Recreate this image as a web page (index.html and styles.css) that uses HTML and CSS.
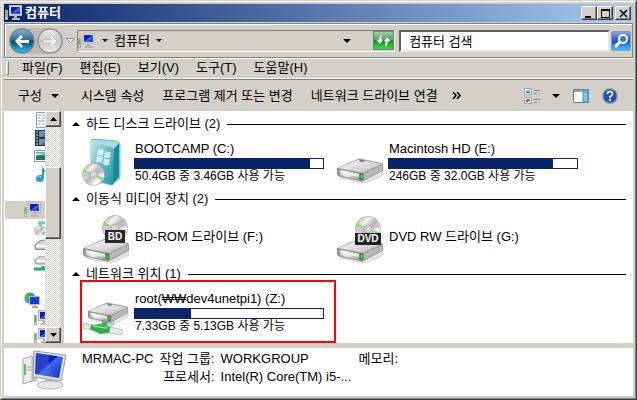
FILE: index.html
```html
<!DOCTYPE html>
<html lang="ko">
<head>
  <meta charset="UTF-8">
  <title>컴퓨터</title>
  <link rel="stylesheet" href="styles.css">
</head>
<body>

<!-- Shared icons -->
<svg class="sprite" width="0" height="0" aria-hidden="true">
  <defs>
    <linearGradient id="screen" x1="0" y1="0" x2="1" y2="1">
      <stop offset="0" stop-color="#0a1fa8"/><stop offset=".45" stop-color="#0620b4"/>
      <stop offset=".5" stop-color="#3f68e6"/><stop offset="1" stop-color="#0a28c0"/>
    </linearGradient>
    <linearGradient id="metal" x1="0" y1="0" x2="1" y2="1">
      <stop offset="0" stop-color="#fafafa"/><stop offset=".6" stop-color="#d6d6d6"/><stop offset="1" stop-color="#a8a8a8"/>
    </linearGradient>
    <linearGradient id="metalFront" x1="0" y1="0" x2="1" y2="0">
      <stop offset="0" stop-color="#9a9a9a"/><stop offset=".3" stop-color="#eeeeee"/><stop offset="1" stop-color="#8c8c8c"/>
    </linearGradient>
    <linearGradient id="disc" x1="0" y1="0" x2="1" y2="1">
      <stop offset="0" stop-color="#8f8f8f"/><stop offset=".3" stop-color="#f4f4f4"/>
      <stop offset=".5" stop-color="#b5b5b5"/><stop offset=".75" stop-color="#fdfdfd"/><stop offset="1" stop-color="#8a8a8a"/>
    </linearGradient>
    <linearGradient id="teal" x1="0" y1="0" x2="1" y2="1">
      <stop offset="0" stop-color="#c5e9ee"/><stop offset=".5" stop-color="#67b9c6"/><stop offset="1" stop-color="#1f93a2"/>
    </linearGradient>
    <linearGradient id="backFill" x1="0" y1="0" x2="0" y2="1">
      <stop offset="0" stop-color="#8fb4cc"/><stop offset=".45" stop-color="#2b6d99"/>
      <stop offset=".5" stop-color="#044a7b"/><stop offset="1" stop-color="#27c3f3"/>
    </linearGradient>
    <linearGradient id="nextFill" x1="0" y1="0" x2="0" y2="1">
      <stop offset="0" stop-color="#eeeeec"/><stop offset=".5" stop-color="#c6c6c3"/><stop offset="1" stop-color="#ecebe8"/>
    </linearGradient>

    <symbol id="pc" viewBox="0 0 18 16">
      <rect x=".5" y="5.5" width="2" height="9" fill="#e4e4e4" stroke="#aaa"/>
      <rect x="1" y="6" width="1" height="6" fill="#35d42f"/>
      <rect x="4.5" y=".5" width="12" height="10" fill="#ddd" stroke="#b5b5b5"/>
      <rect x="6" y="2" width="9" height="7" fill="url(#screen)"/>
      <path d="M9 11h3v2h3v2H7v-2h2z" fill="#b4b4b4"/>
    </symbol>

    <symbol id="pcLarge" viewBox="0 0 46 40">
      <path d="M1 9l9-3v25l-9 3z" fill="#ededed" stroke="#aaa"/>
      <path d="M10 6l5 1v24l-5 1z" fill="#bdbdbd"/>
      <rect x="2" y="14" width="2" height="11" fill="#42d035"/>
      <path d="M5 17h4M5 20h4" stroke="#999"/>
      <path d="M12 1l32 4-5 26-28-4z" fill="#dedede" stroke="#9b9b9b"/>
      <path d="M14 3l27 4-4 21-24-4z" fill="url(#screen)"/>
      <path d="M14 3l13 2c-1 8 1 14 5 22l-19-3z" fill="#5577e2" opacity=".4"/>
      <path d="M23 29h8l1 5h-9z" fill="#b6b6b6"/>
      <ellipse cx="28" cy="35" rx="13" ry="4" fill="#e8e8e8" stroke="#b5b5b5"/>
    </symbol>

    <symbol id="drive" viewBox="0 0 48 26">
      <path d="M2 15l26 9 19-10v4L29 26 4 21z" fill="#999" opacity=".3"/>
      <path d="M1 10L22 1q2-1 4 0l20 4q1 1 1 2v6L28 23q-2 1-4 0L2 18q-1-1-1-2z" fill="#999"/>
      <path d="M2 10L22 2h4l20 4-19 9z" fill="url(#metal)"/>
      <path d="M2 11l25 5v7L3 18q-1-1-1-2z" fill="url(#metalFront)" stroke="#888" stroke-width=".8"/>
      <path d="M27 16l19-9v6l-19 9z" fill="#b8b8b8"/>
      <path d="M4 12l19 4v3L5 16z" fill="#f4f4f4" opacity=".8"/>
      <path d="M24 16h3v5h-3z" fill="#39dc2b" stroke="#22691e" stroke-width=".8"/>
      <ellipse cx="26" cy="3" rx="3" ry="1" fill="#777"/>
    </symbol>

    <symbol id="discShape" viewBox="0 0 26 26">
      <circle cx="13" cy="13" r="12.5" fill="url(#disc)" stroke="#999" stroke-width=".6"/>
      <path d="M13 13L2 7l-1 4zM13 13l11 3-2 4z" fill="#67e064" opacity=".8"/>
      <path d="M13 13L1 12v4zM13 13l11-5 1 3z" fill="#e58bdc" opacity=".6"/>
      <path d="M13 13L5 3l-2 3z" fill="#f2df6a" opacity=".5"/>
      <circle cx="13" cy="13" r="4" fill="#d9d9d9" stroke="#999" stroke-width=".6"/>
      <circle cx="13" cy="13" r="1.6" fill="#fff" stroke="#999" stroke-width=".6"/>
    </symbol>

    <symbol id="bootcamp" viewBox="0 0 40 48">
      <path d="M9 2q0-2 3-2l22 2q4 1 4 4v33l-8 7-21-5z" fill="#a9dbe2" stroke="#5f9da8" stroke-width=".7"/>
      <path d="M9 2l20 6q3 1 3 4l-2 34-21-6z" fill="url(#teal)"/>
      <path d="M32 10l5-6v34l-7 8z" fill="#168c9b"/>
      <path d="M16 11q3-2 6 0l-1 6q-3-2-6 0zM23 12q3 2 6 1l-1 6q-3 1-6-1zM15 18q3-2 6 0l-1 6q-3-2-6 0zM22 19q3 2 6 1l-1 6q-3 1-6-1z" fill="#e3f5f8" opacity=".85"/>
      <use href="#discShape" x="0" y="24" width="23" height="23"/>
    </symbol>

    <symbol id="tinyDrive" viewBox="0 0 16 14">
      <path d="M1 6l5-4h10v8H3q-2 0-2-2z" fill="#d8d8d8" stroke="#888"/>
      <path d="M2 7h14" stroke="#f8f8f8" stroke-width="2"/>
    </symbol>

    <symbol id="plug" viewBox="0 0 42 16">
      <path d="M24 0h8v4l-4 4z" fill="#d5dedc" stroke="#a9b6b3" stroke-width=".7"/>
      <path d="M1 3l10 2-1 5-9-2zM28 7l13 3-2 5-12-2z" fill="#dfe9e8" stroke="#9fb1ae" stroke-width=".7"/>
      <path d="M9 5l9-1 10 3-1 6-9 1-10-5z" fill="#27ad4a"/>
      <path d="M11 6l14 2" stroke="#8ee6a0" stroke-width="1.5"/>
      <path d="M20 0h5v7h-5z" fill="#32b954"/>
    </symbol>
  </defs>
</svg>

<div class="window">
  <div class="frame">
    <header class="title-bar">
      <svg class="icon-pc" viewBox="0 0 18 16"><use href="#pc"/></svg>
      <h1>컴퓨터</h1>
      <div class="window-buttons">
        <button aria-label="최소화"><svg viewBox="0 0 9 9"><path d="M0 7h6v2H0z"/></svg></button>
        <button aria-label="최대화"><svg viewBox="0 0 9 9"><path fill-rule="evenodd" d="M0 0h9v9H0zM1 2v6h7V2z"/></svg></button>
        <button class="close" aria-label="닫기"><svg viewBox="0 0 9 9"><path d="M1 1l7 7M8 1L1 8" stroke="#000" stroke-width="1.6"/></svg></button>
      </div>
    </header>

    <nav class="nav-bar">
      <div class="travel">
        <button aria-label="뒤로">
          <svg viewBox="0 0 26 26"><circle cx="13" cy="13" r="12" fill="url(#backFill)" stroke="#6f8796" stroke-width="1.5"/><path d="M6 13l6-6 2 2-3 3h9v3h-9l3 3-2 2z" fill="#fff"/></svg>
        </button>
        <button aria-label="앞으로">
          <svg viewBox="0 0 26 26"><circle cx="13" cy="13" r="12" fill="url(#nextFill)" stroke="#949494" stroke-width="1.5"/><path d="M20 13l-6-6-2 2 3 3H6v3h9l-3 3 2 2z" fill="#f2f2f0" stroke="#b5b5b2" stroke-width=".7"/></svg>
        </button>
      </div>
      <button class="recent" aria-label="최근 위치"><svg viewBox="0 0 9 6"><path d="M.5.5h8l-4 4z" fill="#fff" stroke="#85898c"/></svg></button>
      <div class="address">
        <svg class="icon-pc" viewBox="0 0 18 16"><use href="#pc"/></svg>
        <button class="arrow small" aria-label="위치"></button>
        <button>컴퓨터</button>
        <button class="arrow small" aria-label="하위 위치"></button>
        <button class="arrow history" aria-label="이전 위치"></button>
        <button class="refresh" aria-label="새로 고침">
          <svg viewBox="0 0 16 14"><path d="M7 0Q3 1 3 6H0l4 5 4-5H6q0-3 1-6zM9 14q4-1 4-6h3l-4-5-4 5h2q0 3-1 6z" fill="#fff" stroke="#35743b" stroke-width=".5"/></svg>
        </button>
      </div>
      <div class="search">
        <input type="text" value="컴퓨터 검색" aria-label="컴퓨터 검색">
        <button class="search-btn" aria-label="검색">
          <svg viewBox="0 0 16 16"><path d="M7 9l-5 5" stroke="#fff" stroke-width="3"/><circle cx="10" cy="6" r="4" fill="#3978d9" stroke="#fff" stroke-width="2"/></svg>
        </button>
      </div>
    </nav>

    <div class="menu-bar">
      <span class="gripper"></span>
      <button>파일(F)</button>
      <button>편집(E)</button>
      <button>보기(V)</button>
      <button>도구(T)</button>
      <button>도움말(H)</button>
    </div>

    <div class="command-bar">
      <button class="organize">구성 <span class="arrow"></span></button>
      <button>시스템 속성</button>
      <button>프로그램 제거 또는 변경</button>
      <button>네트워크 드라이브 연결</button>
      <button class="more" aria-label="더 보기"><svg viewBox="0 0 9 7"><path d="M1 0l3 3.5L1 7M5 0l3 3.5L5 7" fill="none" stroke="#000" stroke-width="1.5"/></svg></button>
      <div class="view-tools">
        <button class="views" aria-label="보기 변경">
          <svg viewBox="0 0 16 16" width="16" height="16">
            <path d="M.5.5h7v6h-7zM.5 9.5h7v6h-7z" fill="#fff" stroke="#95a5b5"/>
            <path d="M2 2h4v2H2z" fill="#78c4f0"/><path d="M2 4h4v1H2z" fill="#256b48"/>
            <path d="M2 11h2v2H2z" fill="#e45b28"/><path d="M4 11h2v2H4z" fill="#38a445"/><path d="M2 13h2v1H2z" fill="#2850c0"/><path d="M4 13h2v1H4z" fill="#e9b71c"/>
            <path d="M10 2.5h6M10 5.5h3M10 11.5h6M10 14.5h3" stroke="#7b8792"/>
          </svg>
          <span class="arrow"></span>
        </button>
        <button aria-label="미리 보기 창">
          <svg viewBox="0 0 16 14" width="16" height="14"><path d="M.5.5h15v13H.5z" fill="#fff" stroke="#56819c"/><path d="M1 1h14v2H1z" fill="#8aa9bd"/><path d="M10 3h5v10h-5z" fill="#79c5e2" stroke="#4b91b4"/></svg>
        </button>
        <button aria-label="도움말">
          <svg viewBox="0 0 16 16" width="16" height="16"><circle cx="8" cy="8" r="7.3" fill="#2450b8" stroke="#8b9cbc" stroke-width="1.4"/><path d="M5.5 6q0-2.500 2.500-2.500t2.500 2.500q0 1-2.500 3v1" fill="none" stroke="#fff" stroke-width="1.7"/><path d="M7 11h2v2H7z" fill="#fff"/></svg>
        </button>
      </div>
    </div>

    <div class="panes">
      <aside class="tree">
        <ul>
          <li><svg class="child" viewBox="0 0 16 16"><path d="M2.5.5h11v15h-11z" fill="#fff" stroke="#8ba2b5"/><path d="M4 3h3M4 6h2M4 9h3M4 12h2" stroke="#5a9dd4"/><path d="M8 3h5M8 6h5M8 9h5M8 12h5" stroke="#8c9aa8"/></svg></li>
          <li><svg class="child" viewBox="0 0 16 16"><path d="M1 0h15v16H1z" fill="#26333d"/><path d="M5 1h11v6H5zM5 9h11v6H5z" fill="#4a9bd0"/><path d="M8 7l3-4 5 4zM7 15l5-5 3 5z" fill="#a45330"/><path d="M3 1v14" stroke="#e4eaee" stroke-dasharray="2 1"/></svg></li>
          <li><svg class="child" viewBox="0 0 16 16"><path d="M.5 2.5h15v11H.5z" fill="#fff" stroke="#889cad"/><path d="M2 4h14v8H2z" fill="#61b8ed"/><path d="M2 8q6-3 14 2v2H2z" fill="#22775b"/><path d="M2 7h7q-3-2-7-1z" fill="#e7f7ff"/></svg></li>
          <li><svg class="child" viewBox="0 0 16 16"><path d="M8 0q1 4 6 5v4q-2-3-4-3v6q0 4-4 4t-4-3 3-4h3z" fill="#2b9be4"/><path d="M4 11q2-2 3 0" fill="none" stroke="#b5e4ff"/></svg></li>
        </ul>
        <ul>
          <li class="selected"><svg class="icon-pc" viewBox="0 0 18 16"><use href="#pc"/></svg></li>
          <li><svg class="child" viewBox="0 0 16 16"><path d="M4 1l12 1v12l-10 1z" fill="#6fc7d5"/><path d="M8 4h3v3H8zM12 4h3v3h-3zM8 8h3v3H8z" fill="#dff8fc"/><use href="#discShape" x="0" y="6" width="10" height="10"/></svg></li>
          <li><svg class="child" viewBox="0 0 16 14"><use href="#tinyDrive"/></svg></li>
          <li><svg class="child" viewBox="0 0 16 16"><use href="#tinyDrive" y="-2" width="16" height="14"/><path d="M0 13h16M9 10v4" stroke="#24aa66" stroke-width="3"/></svg></li>
        </ul>
        <ul>
          <li><svg viewBox="0 0 16 16"><circle cx="6" cy="6" r="5.5" fill="#2c8fdf"/><path d="M1 5q2-5 6-4l-1 4-2 1 1 4q-3-1-4-5z" fill="#41bb4d"/><path d="M5.5 4.500h10v8h-10z" fill="#183bd1" stroke="#b5bfcc"/><path d="M10 13h2v1h2v2H8v-2h2z" fill="#aaa"/></svg></li>
          <li><svg class="child icon-pc" viewBox="0 0 18 16"><use href="#pc"/></svg></li>
          <li><svg class="child icon-pc" viewBox="0 0 18 16"><use href="#pc"/></svg></li>
        </ul>
      </aside>

      <div class="scrollbar">
        <button aria-label="위로"><svg viewBox="0 0 7 4"><path d="M0 4h7L3.5 0z"/></svg></button>
        <div class="track"><div class="thumb"></div></div>
        <button aria-label="아래로"><svg viewBox="0 0 7 4"><path d="M0 0h7L3.5 4z"/></svg></button>
      </div>

      <main class="content">
        <section>
          <h2><button class="arrow up" aria-label="접기"></button>하드 디스크 드라이브 (2)</h2>
          <div class="drives">
            <div class="drive">
              <svg class="drive-icon" viewBox="0 0 48 58"><use href="#bootcamp" y="6" width="40" height="48"/></svg>
              <div class="info">
                <p class="name">BOOTCAMP (C:)</p>
                <div class="bar"><div class="used" style="width: 93%"></div></div>
                <p class="free">50.4GB 중 3.46GB 사용 가능</p>
              </div>
            </div>
            <div class="drive">
              <svg class="drive-icon" viewBox="0 0 48 58"><use href="#drive" y="25" width="48" height="26"/></svg>
              <div class="info">
                <p class="name">Macintosh HD (E:)</p>
                <div class="bar"><div class="used" style="width: 87%"></div></div>
                <p class="free">246GB 중 32.0GB 사용 가능</p>
              </div>
            </div>
          </div>
        </section>

        <section>
          <h2><button class="arrow up" aria-label="접기"></button>이동식 미디어 장치 (2)</h2>
          <div class="drives">
            <div class="drive">
              <svg class="drive-icon" viewBox="0 0 48 58">
                <use href="#drive" y="30" width="48" height="26"/>
                <use href="#discShape" x="20" y="7" width="26" height="26"/>
                <path d="M23 22h20v13H23z" fill="#282828"/>
                <text class="badge" x="33" y="32">BD</text>
              </svg>
              <div class="info"><p class="name">BD-ROM 드라이브 (F:)</p></div>
            </div>
            <div class="drive">
              <svg class="drive-icon" viewBox="0 0 48 58">
                <use href="#drive" y="30" width="48" height="26"/>
                <use href="#discShape" x="19" y="8" width="26" height="26"/>
                <path d="M19 25h26v12H19z" fill="#222"/>
                <text class="badge" x="32" y="34">DVD</text>
              </svg>
              <div class="info"><p class="name">DVD RW 드라이브 (G:)</p></div>
            </div>
          </div>
        </section>

        <section>
          <h2><button class="arrow up" aria-label="접기"></button>네트워크 위치 (1)</h2>
          <div class="drives">
            <div class="drive marked">
              <svg class="drive-icon" viewBox="0 0 48 58">
                <use href="#plug" y="37" width="42" height="16"/>
                <use href="#drive" x="5" y="19" width="42" height="23"/>
              </svg>
              <div class="info">
                <p class="name">root(₩₩dev4unetpi1) (Z:)</p>
                <div class="bar"><div class="used" style="width: 30%"></div></div>
                <p class="free">7.33GB 중 5.13GB 사용 가능</p>
              </div>
            </div>
          </div>
        </section>
      </main>
    </div>

    <footer class="details">
      <svg viewBox="0 0 46 40"><use href="#pcLarge"/></svg>
      <div class="facts">
        <span>MRMAC-PC</span><span class="label">작업 그룹:</span><span>WORKGROUP</span><span>메모리:</span>
        <span class="label wide">프로세서:</span><span>Intel(R) Core(TM) i5-...</span>
      </div>
    </footer>
  </div>
</div>

</body>
</html>
```
FILE: styles.css
```css
* {
  box-sizing: border-box;
}

body {
  margin: 0;
  background: #d4d0c8;
  color: #000;
  font-family: "Liberation Sans", "Noto Sans CJK KR", sans-serif;
  font-size: 13px;
  line-height: 16px;
}

h1, h2, p, ul {
  margin: 0;
  padding: 0;
  font-size: 13px;
}

button {
  display: flex;
  align-items: center;
  justify-content: center;
  flex: none;
  margin: 0;
  padding: 0;
  border: none;
  background: none;
  color: inherit;
  font: inherit;
  white-space: nowrap;
}

svg {
  display: block;
  flex: none;
}

.sprite {
  position: absolute;
}

.window {
  height: 100vh;
  min-height: 400px;
  border: 1px solid;
  border-color: #d4d0c8 #404040 #404040 #d4d0c8;
}

.frame {
  display: flex;
  flex-direction: column;
  height: 100%;
  padding: 2px;
  border: 1px solid;
  border-color: #fff #808080 #808080 #fff;
}

.icon-pc {
  width: 18px;
  height: 16px;
}

.arrow::after {
  content: "";
  display: block;
  border: 4px solid transparent;
  border-top-color: #000;
  border-bottom: none;
}

.arrow.small::after {
  border-width: 3px;
  border-bottom: none;
}

.arrow.up::after {
  border: 4px solid transparent;
  border-bottom-color: #000;
  border-top: none;
}

/* Title bar */
.title-bar {
  display: flex;
  align-items: center;
  gap: 2px;
  flex: none;
  height: 18px;
  padding: 0 2px 0 1px;
  background: linear-gradient(to right, #0a246a, #a6caf0);
  color: #fff;
}

.title-bar h1 {
  flex: 1;
}

.window-buttons {
  display: flex;
}

.window-buttons button {
  width: 16px;
  height: 14px;
}

.window-buttons svg {
  width: 9px;
  height: 9px;
}

.window-buttons .close {
  margin-left: 2px;
}

.window-buttons button,
.scrollbar button,
.thumb {
  background: #d4d0c8;
  border: 1px solid;
  border-color: #fff #404040 #404040 #fff;
  box-shadow: inset -1px -1px #808080;
}

/* Address and search */
.nav-bar {
  display: flex;
  align-items: center;
  flex: none;
  height: 35px;
  margin-top: 1px;
  padding: 0 1px 0 4px;
  border: 1px solid #808080;
  box-shadow: inset 1px 1px #fff, 0 1px #fff;
}

.travel {
  display: flex;
  gap: 2px;
  border-radius: 13px;
  background: #bdbab4;
}

.travel svg {
  width: 26px;
  height: 26px;
}

.recent {
  width: 14px;
}

.recent svg {
  width: 9px;
  height: 6px;
}

.address {
  display: flex;
  align-items: center;
  flex: 15;
  height: 22px;
  margin-right: 4px;
  border: 1px solid;
  border-color: #808080 #fff #fff #808080;
}

.address .small {
  width: 18px;
}

.address .history {
  margin-left: auto;
  width: 24px;
  margin-right: 14px;
}

.refresh {
  width: 21px;
  height: 19px;
  border: 1px solid #658b68;
  background: linear-gradient(#a4cda2, #52a95a 45%, #089016 50%, #46d647);
}

.refresh svg {
  width: 15px;
  height: 13px;
}

.search {
  display: flex;
  align-items: center;
  flex: 11;
}

.search input {
  flex: 1;
  min-width: 0;
  height: 22px;
  margin: 0 1px 0 0;
  padding: 0 8px;
  border: 2px solid;
  border-color: #606060 #e8e6e0 #e8e6e0 #606060;
  background: #fff;
  color: #000;
  font: inherit;
  outline: none;
}

.search-btn {
  width: 20px;
  height: 20px;
  border: 1px solid #8c9cb4;
  border-radius: 2px;
  background: linear-gradient(#88a6e8, #2250cc 50%, #38c8f4);
}

.search-btn svg {
  width: 16px;
  height: 16px;
}

/* Menu and command bars */
.menu-bar {
  display: flex;
  align-items: center;
  gap: 17px;
  flex: none;
  height: 20px;
  margin-top: 1px;
  padding: 0 2px 2px;
  border-bottom: 1px solid #fff;
}

.gripper {
  width: 3px;
  height: 14px;
  margin-right: -4px;
  border: 1px solid;
  border-color: #fff #808080 #808080 #fff;
}

.command-bar {
  display: flex;
  align-items: center;
  gap: 18px;
  flex: none;
  height: 32px;
  padding: 0 15px 0 14px;
  border-top: 1px solid #808080;
}

.organize {
  gap: 9px;
  margin-right: 4px;
}

.more {
  margin-left: -4px;
}

.more svg {
  width: 9px;
  height: 7px;
}

.view-tools {
  display: flex;
  align-items: center;
  gap: 13px;
  margin-left: auto;
}

.views {
  gap: 12px;
}

/* Folder tree */
.panes {
  display: flex;
  flex: 1;
  min-height: 0;
}

.tree {
  display: flex;
  flex-direction: column;
  gap: 18px;
  flex: none;
  width: 41px;
  padding-left: 1px;
  overflow: hidden;
  background: #fff;
}

.tree li {
  display: flex;
  align-items: center;
  height: 18px;
  padding-left: 19px;
}

.tree svg {
  height: 16px;
}

.tree .child {
  margin-left: 10px;
}

.tree .selected {
  background: #d4d0c8;
}

.scrollbar {
  display: flex;
  flex-direction: column;
  flex: none;
  width: 16px;
}

.scrollbar button {
  width: 16px;
  height: 16px;
}

.scrollbar svg {
  width: 7px;
  height: 4px;
}

.track {
  flex: 1;
  min-height: 0;
  display: flex;
  flex-direction: column;
  background: repeating-conic-gradient(#fff 0 25%, #d4d0c8 0 50%) 0 0 / 2px 2px;
}

.track::before {
  content: "";
  flex: 0 0 20%;
}

.thumb {
  flex: 0 0 36%;
}

/* Drive list */
.content {
  flex: 1;
  min-width: 0;
  margin-left: 3px;
  padding: 5px 7px 0 8px;
  overflow: hidden;
  background: #fff;
}

.content h2 {
  display: flex;
  align-items: center;
  font-weight: normal;
  white-space: nowrap;
}

.content h2::after {
  content: "";
  flex: 1;
  margin-left: 7px;
  border-top: 1px solid #000;
}

.content h2 .arrow {
  margin-right: 6px;
}

.drives {
  display: grid;
  grid-template-columns: repeat(auto-fill, 252px);
  gap: 2px;
  padding-left: 10px;
}

.drive {
  display: flex;
  align-items: center;
  gap: 4px;
  height: 59px;
}

.drive.marked {
  outline: 2px solid #f00;
}

.drive-icon {
  width: 48px;
  height: 58px;
}

.badge {
  fill: #fff;
  font-size: 10px;
  font-weight: bold;
  text-anchor: middle;
}

.info {
  width: 190px;
}

.name,
.free {
  padding-left: 1px;
  white-space: nowrap;
}

.bar {
  height: 11px;
  margin-top: 1px;
  border: 1px solid #0a246a;
}

.used {
  height: 100%;
  background: #0a246a;
}

.free {
  font-size: 12px;
  line-height: 14px;
}

/* Details pane */
.details {
  display: flex;
  gap: 14px;
  flex: none;
  height: 48px;
  margin-top: 5px;
  padding: 2px 18px;
  background: #fff;
}

.details svg {
  width: 46px;
  height: 40px;
}

.facts {
  display: grid;
  grid-template-columns: auto auto 132px auto;
  column-gap: 6px;
  align-content: start;
  line-height: 18px;
  white-space: nowrap;
}

.label {
  text-align: right;
}

.label.wide {
  grid-column: span 2;
}
```
